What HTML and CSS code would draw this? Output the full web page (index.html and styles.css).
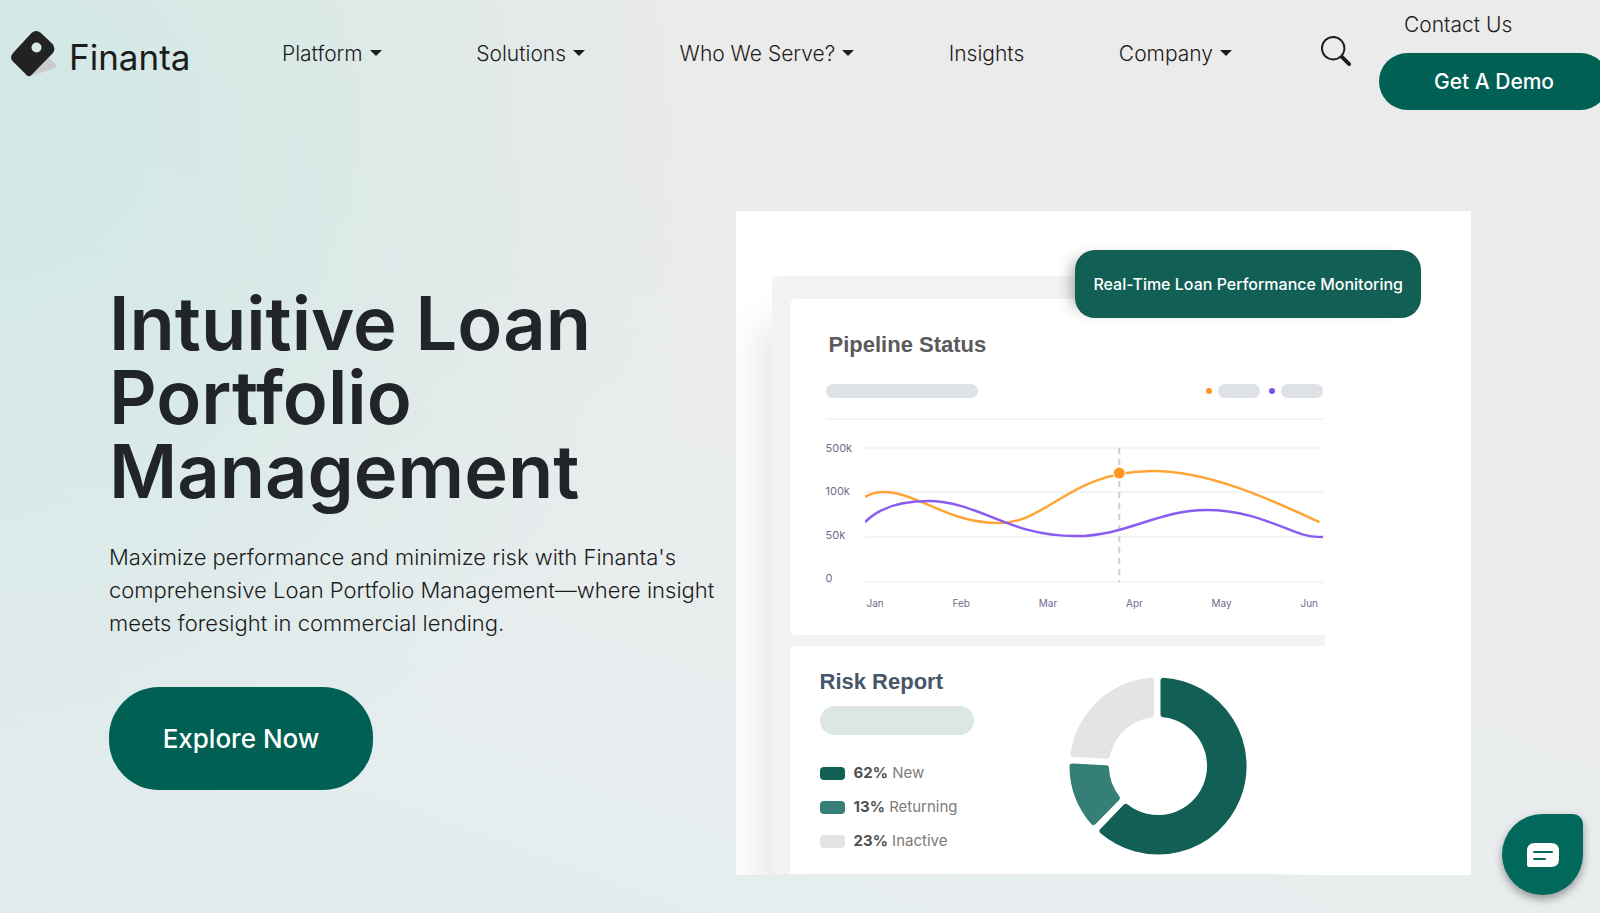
FILE: index.html
```html
<!DOCTYPE html>
<html lang="en">
<head>
  <meta charset="UTF-8">
  <meta name="viewport" content="width=device-width, initial-scale=1">
  <title>Finanta</title>
  <link rel="stylesheet" href="styles.css">
</head>
<body>
  <header class="header">
    <a class="logo" href="#">
      <svg class="logo-mark" viewBox="0 0 46 46" aria-hidden="true">
        <path d="M20 45 L44 37 Q46 36 44 33 L38 27 Z" fill="#cbc9ca"/>
        <path d="M20.500 2 Q25 -2 30 2 L41.500 13 Q45 17.500 42 22 L20.500 44 Q18 46.500 15.500 44 L2 30.500 Q-2 26.500 2 22 Z" fill="#222"/>
        <circle cx="25.500" cy="16.500" r="5" fill="#dbe9e6"/>
      </svg>
      <span>Finanta</span>
    </a>
    <nav class="nav">
      <a class="dropdown" href="#">Platform</a>
      <a class="dropdown" href="#">Solutions</a>
      <a class="dropdown" href="#">Who We Serve?</a>
      <a href="#">Insights</a>
      <a class="dropdown" href="#">Company</a>
    </nav>
    <button class="search" type="button" aria-label="Search">
      <svg viewBox="0 0 16 16" aria-hidden="true">
        <path fill="#1c1c1c" d="M11.742 10.344a6.500 6.500 0 1 0-1.397 1.398h-.001c.03.04.062.078.098.115l3.850 3.850a1 1 0 0 0 1.415-1.414l-3.850-3.850a1.007 1.007 0 0 0-.115-.1zM12 6.500a5.500 5.500 0 1 1-11 0 5.500 5.500 0 0 1 11 0z"/>
      </svg>
    </button>
    <div class="actions">
      <a class="contact" href="#">Contact Us</a>
      <a class="btn btn-demo" href="#">Get A Demo</a>
    </div>
  </header>

  <main class="hero">
    <section class="intro">
      <h1>Intuitive Loan Portfolio Management</h1>
      <p>Maximize performance and minimize risk with Finanta's comprehensive Loan Portfolio Management—where insight meets foresight in commercial lending.</p>
      <a class="btn btn-explore" href="#">Explore Now</a>
    </section>

    <section class="preview">
      <div class="badge">Real-Time Loan Performance Monitoring</div>
      <div class="device">
        <div class="card pipeline">
          <h2>Pipeline Status</h2>
          <div class="filters">
            <span class="bar bar-long"></span>
            <span class="dot orange"></span>
            <span class="bar"></span>
            <span class="dot purple"></span>
            <span class="bar"></span>
          </div>
          <div class="chart">
            <div class="y-axis">
              <span>500k</span>
              <span>100k</span>
              <span>50k</span>
              <span>0</span>
            </div>
            <div class="plot">
              <svg viewBox="0 0 458 136" aria-hidden="true">
                <g stroke="#f4f4f6" stroke-width="2">
                  <path d="M0 1H458M0 45H458M0 90H458M0 135H458"/>
                </g>
                <path d="M254 1V135" stroke="#cfcdd8" stroke-width="2" stroke-dasharray="6 5"/>
                <g fill="none" stroke-width="2.500">
                  <path stroke="#ffa538" d="M0 50C6 46 12 45 19 45C52 45 82 76 134 76C182 76 205 24 287 24C342 24 400 50 454 75"/>
                  <path stroke="#8a5cf0" d="M0 75C16 59 38 54 63 54C114 54 142 89 210 89C262 89 292 63 341 63C384 63 412 79 436 87Q446 90 458 90"/>
                </g>
                <circle cx="254" cy="26" r="6" fill="#ff9420" stroke="#fff"/>
              </svg>
              <div class="x-axis">
                <span>Jan</span>
                <span>Feb</span>
                <span>Mar</span>
                <span>Apr</span>
                <span>May</span>
                <span>Jun</span>
              </div>
            </div>
          </div>
        </div>
        <div class="card risk">
          <div class="report">
            <h2>Risk Report</h2>
            <span class="pill"></span>
            <ul class="legend">
              <li><span class="swatch new"></span><span><b>62%</b> New</span></li>
              <li><span class="swatch returning"></span><span><b>13%</b> Returning</span></li>
              <li><span class="swatch inactive"></span><span><b>23%</b> Inactive</span></li>
            </ul>
          </div>
          <svg class="donut" viewBox="-89 -89 178 178" aria-hidden="true">
            <g stroke-width="6" stroke-linejoin="round">
              <path fill="#125f56" stroke="#125f56" d="M5.500 -85.300A85.500 85.500 0 1 1 -55.500 65L-32.200 40.800A52 52 0 1 0 5.500 -51.700Z"/>
              <path fill="#367f77" stroke="#367f77" d="M-64.500 56A85.500 85.500 0 0 1 -85.500 .6L-52 2.300A52 52 0 0 0 -41 32Z"/>
              <path fill="#e4e4e4" stroke="#e4e4e4" d="M-84.600 -12A85.500 85.500 0 0 1 -7 -85.200L-7 -51.500A52 52 0 0 0 -51 -10.200Z"/>
            </g>
          </svg>
        </div>
      </div>
    </section>
  </main>

  <button class="chat" type="button" aria-label="Open chat">
    <svg viewBox="0 0 32 24" aria-hidden="true">
      <path fill="#fff" d="M8 0H24Q32 0 32 8V16Q32 24 24 24H2Q0 24 0 22V8Q0 0 8 0Z"/>
      <path stroke="#00695c" stroke-width="2" stroke-linecap="round" d="M7 9H25M7 16H18"/>
    </svg>
  </button>
</body>
</html>
```
FILE: styles.css
```css
* {
  box-sizing: border-box;
}
body {
  margin: 0;
  min-height: 100vh;
  overflow: hidden;
  font-family: Inter, "Liberation Sans", sans-serif;
  color: #1c1c1c;
  background:
    radial-gradient(ellipse 46% 80% at 0 14%, #d1e8e4 0%, #d1e8e4b0 40%, #d1e8e400 100%),
    linear-gradient(20deg, #e1ebec 0%, #e7edee 30%, #ecebeb 65%, #ecebeb 100%);
}
a {
  color: inherit;
  text-decoration: none;
}
h1, h2, p, ul {
  margin: 0;
}
button {
  border: 0;
  padding: 0;
  cursor: pointer;
}
svg {
  display: block;
}

/* header */
.header {
  display: flex;
  align-items: center;
  height: 110px;
  padding-left: 11px;
  font-size: 21px;
  font-weight: 300;
}
.logo {
  display: flex;
  align-items: center;
  gap: 12px;
  width: 271px;
  padding-bottom: 2px;
  font-size: 35px;
  line-height: 46px;
  font-weight: 400;
}
.logo span {
  padding-top: 6px;
}
.logo-mark {
  width: 46px;
  height: 46px;
}
.nav {
  flex: 1;
  display: flex;
  justify-content: space-between;
  padding-bottom: 4px;
}
.dropdown::after {
  content: "";
  display: inline-block;
  margin-left: 7px;
  vertical-align: 5px;
  border: 6px solid transparent;
  border-top-color: #1c1c1c;
  border-bottom: 0;
}
.search {
  margin: 0 28px 9px 89px;
  background: none;
}
.search svg {
  width: 30px;
  height: 30px;
}
.actions {
  flex: none;
  align-self: flex-start;
  width: 230px;
  margin-right: -9px;
}
.contact {
  display: block;
  padding-left: 25px;
  line-height: 50px;
}
.btn {
  display: block;
  color: #fff;
  background: #006054;
  text-align: center;
  font-weight: 500;
}
.btn-demo {
  margin-top: 3px;
  border-radius: 29px;
  line-height: 57px;
}

/* hero */
.hero {
  display: grid;
  grid-template-columns: 46fr 54fr;
  align-items: center;
  padding: 101px 129px 39px 109px;
}
.intro {
  padding-bottom: 10px;
}
h1 {
  font-size: 74px;
  line-height: 74px;
  font-weight: 600;
  color: #212529;
}
.intro p {
  margin: 33px 0 47px;
  font-size: 22px;
  line-height: 33px;
  font-weight: 300;
}
.btn-explore {
  width: 264px;
  border-radius: 50px;
  font-size: 26px;
  line-height: 103px;
}

/* product preview */
.preview {
  position: relative;
  padding: 65px 146px 1px 36px;
  background: #fff;
  overflow: hidden;
}
.badge {
  position: absolute;
  z-index: 1;
  top: 39px;
  right: 50px;
  padding: 0 18px;
  border-radius: 20px;
  background: #125f56;
  box-shadow: -12px 0 16px -10px #00000060;
  color: #fff;
  font-size: 16px;
  line-height: 68px;
  font-weight: 500;
  white-space: nowrap;
}
.device {
  position: relative;
  padding: 23px 0 0 18px;
  border-radius: 8px 0 0 6px;
  background: #f3f3f3;
  box-shadow: -26px 36px 36px -12px #00000018;
}
.card {
  border-radius: 6px 0 0 6px;
  background: #fff;
}
h2 {
  font-family: "Liberation Sans", sans-serif;
  font-size: 22px;
  line-height: 26px;
}
.pipeline {
  height: 336px;
  padding: 33px 2px 0 36px;
}
.pipeline h2 {
  padding-left: 3px;
  color: #5b5b5b;
}
.filters {
  display: flex;
  align-items: center;
  gap: 6px;
  margin-top: 26px;
  padding-bottom: 20px;
  border-bottom: 2px solid #f4f4f6;
}
.bar {
  width: 42px;
  height: 14px;
  border-radius: 7px;
  background: #dee2e7;
}
.bar-long {
  width: 152px;
  margin-right: auto;
}
.dot {
  width: 6px;
  height: 6px;
  border-radius: 50%;
}
.orange {
  background: #ff9420;
}
.purple {
  margin-left: 3px;
  background: #7a50ec;
}
.chart {
  display: flex;
  margin-top: 27px;
  color: #706c8c;
}
.y-axis {
  display: flex;
  flex-direction: column;
  justify-content: space-between;
  width: 39px;
  height: 144px;
  margin-top: -6px;
  font-size: 11px;
  line-height: 14px;
}
.plot {
  flex: 1;
}
.plot svg {
  width: 100%;
}
.x-axis {
  display: flex;
  justify-content: space-between;
  margin-top: 13px;
  padding: 0 5px 0 2px;
  font-size: 10px;
  line-height: 14px;
}
.risk {
  display: flex;
  justify-content: space-between;
  margin-top: 11px;
  padding: 23px 78px 19px 30px;
  border-radius: 6px 0 0 0;
}
.risk h2 {
  color: #475569;
}
.pill {
  display: block;
  width: 154px;
  height: 29px;
  margin-top: 11px;
  border-radius: 15px;
  background: #dce7e1;
}
.legend {
  display: grid;
  gap: 14px;
  margin-top: 28px;
  padding: 0;
  list-style: none;
  color: #7c7c7c;
  font-size: 15px;
  line-height: 20px;
}
.legend li {
  display: flex;
  align-items: center;
  gap: 9px;
}
.legend b {
  color: #505050;
}
.swatch {
  width: 25px;
  height: 13px;
  border-radius: 4px;
}
.new {
  background: #125f56;
}
.returning {
  background: #367f77;
}
.inactive {
  background: #e4e4e4;
}
.donut {
  width: 178px;
  height: 178px;
  margin-top: 8px;
}

/* chat launcher */
.chat {
  position: fixed;
  right: 17px;
  bottom: 18px;
  display: grid;
  place-items: center;
  width: 81px;
  height: 81px;
  border-radius: 50% 10px 50% 50%;
  background: #00695c;
  box-shadow: 0 4px 8px #00000060;
}
.chat svg {
  width: 32px;
  height: 24px;
}
```
